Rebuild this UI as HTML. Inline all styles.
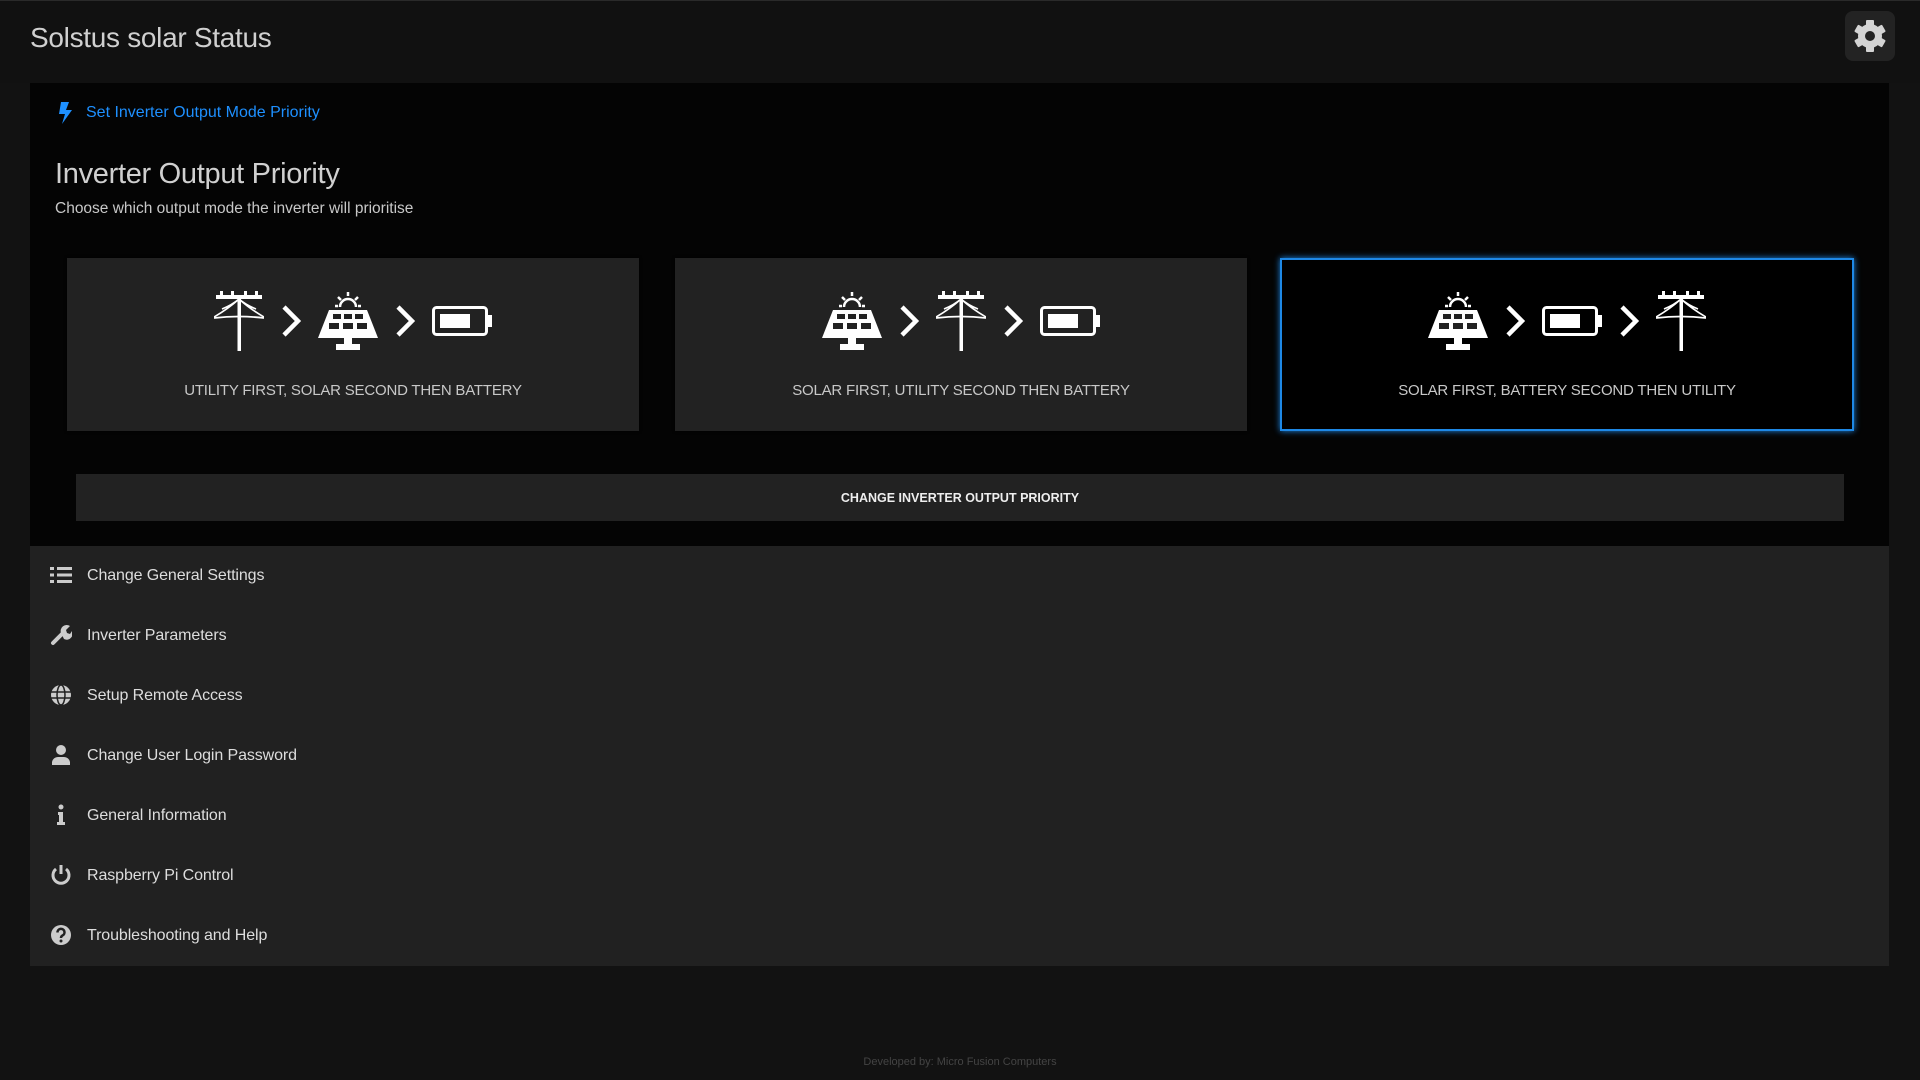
<!DOCTYPE html>
<html><head><meta charset="utf-8"><style>
*{box-sizing:border-box;margin:0;padding:0}
body{width:1920px;height:1080px;background:#121212;font-family:"Liberation Sans",sans-serif;position:relative;overflow:hidden;color:#ddd}
.top{position:absolute;left:0;top:0;width:1920px;height:83px;background:#111;border-top:1px solid #2a2a2a}
.title{position:absolute;left:30px;top:22px;font-size:28px;color:#d0d0d0;font-weight:300;letter-spacing:-0.3px}
.gear{position:absolute;left:1845px;top:11px;width:50px;height:50px;background:#232323;border-radius:8px}
.panel{position:absolute;left:30px;top:83px;width:1859px;height:463px;background:#040404}
.link{position:absolute;left:57px;top:102px;font-size:16px;color:#1e90ff;display:flex;align-items:center}
.link span{margin-left:13px}
h1{position:absolute;left:55px;top:158px;font-size:29px;font-weight:300;color:#d0d0d0;letter-spacing:-0.3px}
.sub{position:absolute;left:55px;top:200px;font-size:15.5px;color:#c8c8c8}
.card{position:absolute;top:258px;height:173px;width:572px;background:#222;box-shadow:0 0 3px #000}
.card.sel{background:#000;border:2px solid #1e88e5;box-shadow:0 0 6px #1e88e5}
.icons{position:absolute;left:0;right:0;top:32px;display:flex;justify-content:center;align-items:center;gap:17px;height:62px}
.lab{position:absolute;left:0;right:0;top:124px;text-align:center;font-size:15px;letter-spacing:-0.2px;color:#c8c8c8;text-transform:uppercase}
.btn{position:absolute;left:76px;top:474px;width:1768px;height:47px;background:#222;color:#eee;font-size:12.5px;font-weight:bold;text-align:center;line-height:49px}
.menu{position:absolute;left:30px;top:546px;width:1859px;height:420px;background:#212121}
.item{position:absolute;left:0;height:30px;display:flex;align-items:center;font-size:16px;color:#ddd}
.item svg{position:absolute;left:20px}
.item span{position:absolute;left:57px;white-space:nowrap;top:7px;letter-spacing:-0.1px}
.foot{position:absolute;left:0;width:1920px;top:1056px;text-align:center;font-size:11px;color:#444}
</style></head><body>
<div class="top"></div>
<div class="title">Solstus solar Status</div>
<div class="gear"><svg width="50" height="50" viewBox="0 0 50 50"><g fill="#d4d4d4" transform="translate(25 25)">
<rect x="-4" y="-16" width="8" height="32" rx="1"/><rect x="-4" y="-16" width="8" height="32" rx="1" transform="rotate(60)"/><rect x="-4" y="-16" width="8" height="32" rx="1" transform="rotate(120)"/><circle r="12"/></g><circle cx="25" cy="25" r="5" fill="#232323"/></svg></div>

<div class="panel"></div>
<div class="link"><svg width="16" height="22" viewBox="0 0 16 22"><path d="M4 0h8l-3 8h6L5 22l3-10H2z" fill="#1e90ff"/></svg><span>Set Inverter Output Mode Priority</span></div>
<h1>Inverter Output Priority</h1>
<div class="sub">Choose which output mode the inverter will prioritise</div>

<svg width="0" height="0" style="position:absolute"><defs>
<g id="pylon"><rect x="2" y="4" width="46" height="4" fill="#fff"/><rect x="6" y="0" width="3" height="5" fill="#fff"/><rect x="41" y="0" width="3" height="5" fill="#fff"/><rect x="17" y="0" width="3" height="5" fill="#fff"/><rect x="30" y="0" width="3" height="5" fill="#fff"/><rect x="23.5" y="6" width="3.5" height="54" fill="#fff"/><path d="M25 8 Q14 18 0 26M25 8 Q36 18 50 26M25 8 Q18 14 8 18M25 8 Q32 14 42 18" stroke="#fff" stroke-width="1.6" fill="none"/><path d="M0 27 Q25 24 50 27" stroke="#fff" stroke-width="1.8" fill="none"/></g>
<g id="chev"><polyline points="3,3 17,17 3,31" stroke="#fff" stroke-width="4.5" fill="none" stroke-linejoin="miter"/></g>
<g id="solar"><path d="M22 16a8 8 0 0 1 16 0" stroke="#fff" stroke-width="2.5" fill="none"/><g stroke="#fff" stroke-width="2.5"><line x1="30" y1="1" x2="30" y2="5"/><line x1="20" y1="6" x2="23" y2="9"/><line x1="40" y1="6" x2="37" y2="9"/><line x1="17" y1="15" x2="20" y2="15"/><line x1="40" y1="15" x2="43" y2="15"/></g>
<path d="M11 19H49L60 47H0Z" fill="#fff"/><g fill="#222"><rect x="15" y="23" width="8" height="5"/><rect x="26" y="23" width="8" height="5"/><rect x="37" y="23" width="8" height="5"/><rect x="11" y="32" width="10" height="6"/><rect x="25" y="32" width="10" height="6"/><rect x="39" y="32" width="10" height="6"/></g><rect x="26" y="47" width="8" height="6" fill="#fff"/><rect x="18" y="53" width="24" height="6" fill="#fff"/></g>
<g id="batt"><rect x="1.5" y="1.5" width="53" height="27" rx="3" stroke="#fff" stroke-width="3" fill="none"/><rect x="55" y="9" width="5" height="12" fill="#fff"/><rect x="8" y="8" width="30" height="14" fill="#fff"/></g>
</defs></svg>

<div class="card" style="left:67px"><div class="icons">
<svg width="50" height="60"><use href="#pylon"/></svg><svg width="20" height="34"><use href="#chev"/></svg><svg width="60" height="60"><use href="#solar"/></svg><svg width="20" height="34"><use href="#chev"/></svg><svg width="60" height="30"><use href="#batt"/></svg>
</div><div class="lab">Utility first, solar second then battery</div></div>
<div class="card" style="left:675px"><div class="icons">
<svg width="60" height="60"><use href="#solar"/></svg><svg width="20" height="34"><use href="#chev"/></svg><svg width="50" height="60"><use href="#pylon"/></svg><svg width="20" height="34"><use href="#chev"/></svg><svg width="60" height="30"><use href="#batt"/></svg>
</div><div class="lab">Solar first, utility second then battery</div></div>
<div class="card sel" style="left:1280px;width:574px"><div class="icons" style="top:30px">
<svg width="60" height="60"><use href="#solar"/></svg><svg width="20" height="34"><use href="#chev"/></svg><svg width="60" height="30"><use href="#batt"/></svg><svg width="20" height="34"><use href="#chev"/></svg><svg width="50" height="60"><use href="#pylon"/></svg>
</div><div class="lab" style="top:122px">Solar first, battery second then utility</div></div>

<div class="btn">CHANGE INVERTER OUTPUT PRIORITY</div>

<div class="menu">
<div class="item" style="top:14px"><svg width="22" height="18" viewBox="0 0 22 18" fill="#ccc"><rect x="0" y="1" width="4" height="3"/><rect x="0" y="7.5" width="4" height="3"/><rect x="0" y="14" width="4" height="3"/><rect x="7" y="1" width="15" height="3"/><rect x="7" y="7.5" width="15" height="3"/><rect x="7" y="14" width="15" height="3"/></svg><span>Change General Settings</span></div>
<div class="item" style="top:74px"><svg width="22" height="22" viewBox="0 0 22 22"><path d="M3 19L12 10" stroke="#ccc" stroke-width="4" stroke-linecap="round"/><path d="M11 9a6 6 0 0 1 9-7l-4 4 1 3 3 1 2-3a6 6 0 0 1-8 8z" fill="#ccc"/></svg><span>Inverter Parameters</span></div>
<div class="item" style="top:134px"><svg width="22" height="22" viewBox="0 0 22 22"><circle cx="11" cy="11" r="10" fill="#ccc"/><g stroke="#212121" stroke-width="1.5" fill="none"><ellipse cx="11" cy="11" rx="4" ry="10"/><line x1="1" y1="8" x2="21" y2="8"/><line x1="1" y1="14" x2="21" y2="14"/></g></svg><span>Setup Remote Access</span></div>
<div class="item" style="top:194px"><svg width="22" height="22" viewBox="0 0 22 22" fill="#ccc"><circle cx="11" cy="6" r="5"/><path d="M2 21v-3a6 6 0 0 1 6-5h6a6 6 0 0 1 6 5v3z"/></svg><span>Change User Login Password</span></div>
<div class="item" style="top:254px"><svg width="22" height="22" viewBox="0 0 22 22" fill="#ccc"><circle cx="11" cy="3" r="2.5"/><path d="M8 8h5v10h2v3H7v-3h2v-7H8z"/></svg><span>General Information</span></div>
<div class="item" style="top:314px"><svg width="22" height="22" viewBox="0 0 22 22"><path d="M6 5a8 8 0 1 0 10 0" stroke="#ccc" stroke-width="3" fill="none"/><line x1="11" y1="1" x2="11" y2="10" stroke="#ccc" stroke-width="3"/></svg><span>Raspberry Pi Control</span></div>
<div class="item" style="top:374px"><svg width="22" height="22" viewBox="0 0 22 22"><circle cx="11" cy="11" r="10" fill="#ccc"/><path d="M7.5 8.5a3.5 3.5 0 1 1 5 3c-1.2.6-1.5 1.2-1.5 2.5" stroke="#212121" stroke-width="2.5" fill="none"/><circle cx="11" cy="17" r="1.5" fill="#212121"/></svg><span>Troubleshooting and Help</span></div>
</div>
<div class="foot">Developed by: Micro Fusion Computers</div>
</body></html>
